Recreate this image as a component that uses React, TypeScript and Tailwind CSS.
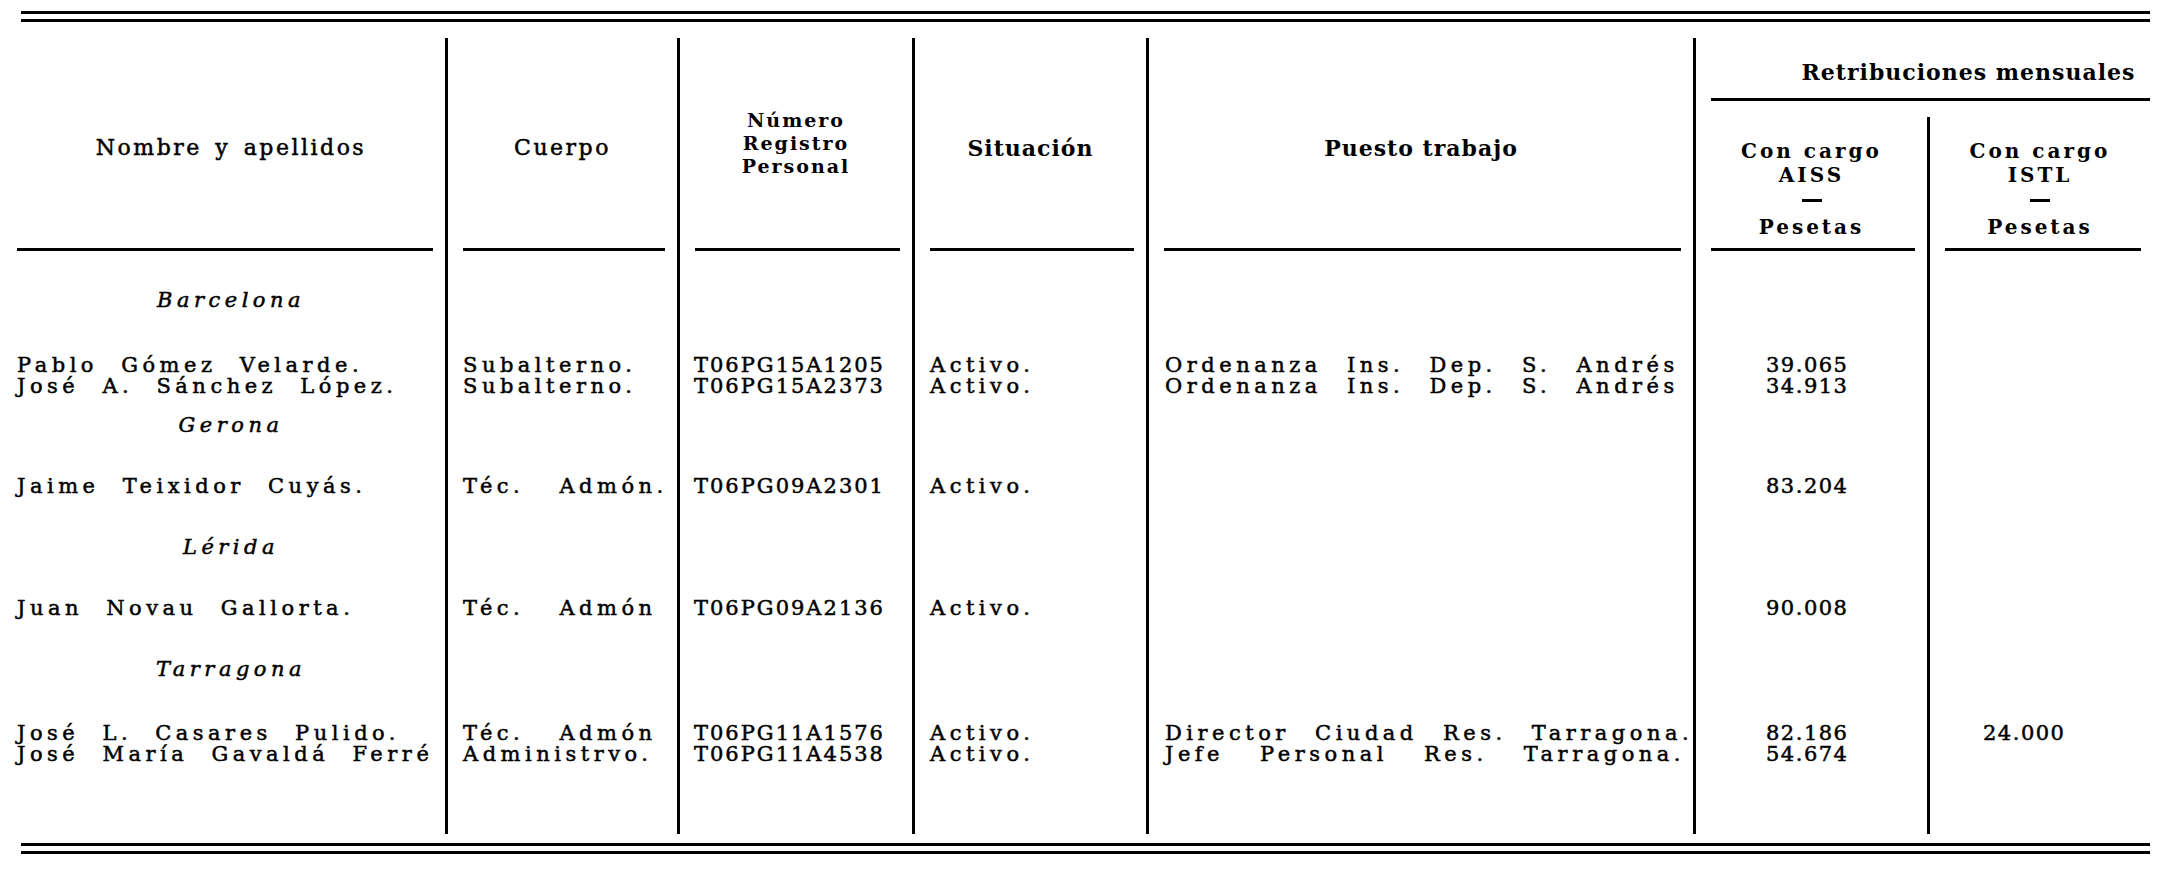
const cols = "grid grid-cols-[428px_232px_235px_234px_547px_234px_223px]";
const serif = "font-['DejaVu_Serif',serif]";
const ink = "[-webkit-text-stroke:0.5px_#000]";

type Person = {
  name: string;
  cuerpo: string;
  nrp: string;
  situacion: string;
  puesto?: string;
  justify?: boolean;
  aiss: string;
  istl?: string;
};

const groups: { province: string; gap: string; people: Person[] }[] = [
  {
    province: "Barcelona",
    gap: "pt-[38px]",
    people: [
      {
        name: "Pablo Gómez Velarde.",
        cuerpo: "Subalterno.",
        nrp: "T06PG15A1205",
        situacion: "Activo.",
        puesto: "Ordenanza Ins. Dep. S. Andrés",
        aiss: "39.065",
      },
      {
        name: "José A. Sánchez López.",
        cuerpo: "Subalterno.",
        nrp: "T06PG15A2373",
        situacion: "Activo.",
        puesto: "Ordenanza Ins. Dep. S. Andrés",
        aiss: "34.913",
      },
    ],
  },
  {
    province: "Gerona",
    gap: "pt-[18px]",
    people: [
      {
        name: "Jaime Teixidor Cuyás.",
        cuerpo: "Téc. Admón.",
        nrp: "T06PG09A2301",
        situacion: "Activo.",
        aiss: "83.204",
      },
    ],
  },
  {
    province: "Lérida",
    gap: "pt-[40px]",
    people: [
      {
        name: "Juan Novau Gallorta.",
        cuerpo: "Téc. Admón",
        nrp: "T06PG09A2136",
        situacion: "Activo.",
        aiss: "90.008",
      },
    ],
  },
  {
    province: "Tarragona",
    gap: "pt-[40px]",
    people: [
      {
        name: "José L. Casares Pulido.",
        cuerpo: "Téc. Admón",
        nrp: "T06PG11A1576",
        situacion: "Activo.",
        puesto: "Director Ciudad Res. Tarragona.",
        justify: true,
        aiss: "82.186",
        istl: "24.000",
      },
      {
        name: "José María Gavaldá Ferré",
        cuerpo: "Administrvo.",
        nrp: "T06PG11A4538",
        situacion: "Activo.",
        puesto: "Jefe Personal Res. Tarragona.",
        justify: true,
        aiss: "54.674",
      },
    ],
  },
];

// padding / spacing per column of the body
const inner = [
  "pl-0 tracking-[4.5px] [word-spacing:12px]",
  "pl-[15px] tracking-[4.5px]",
  "pl-[14px] tracking-[2px]",
  "pl-[15px] tracking-[4.5px]",
  "pl-[16px] pr-[8px] tracking-[4.5px] [word-spacing:14px]",
  "pl-[70px] tracking-[1.5px]",
  "pl-[53px] tracking-[1.5px]",
];

function Row({ cells, pad = "" }: { cells: React.ReactNode[]; pad?: string }) {
  return (
    <div className={`${cols} leading-[21px]`}>
      {cells.map((c, i) => (
        <div key={i} className={`${i > 0 ? "border-l-[3px] border-black" : ""} ${pad}`}>
          <div className={`${inner[i]} whitespace-nowrap`}>{c}</div>
        </div>
      ))}
    </div>
  );
}

function HeadCell({ children, first }: { children: React.ReactNode; first?: boolean }) {
  return (
    <div className={`flex flex-col ${first ? "" : "border-l-[3px] border-black"}`}>
      <div className="flex flex-1 items-center justify-center pt-[10px] text-center">{children}</div>
      <div className={`h-[3px] bg-black ${first ? "ml-0 mr-[12px]" : "ml-[15px] mr-[12px]"}`} />
      <div className="h-[1px]" />
    </div>
  );
}

function Rules({ className }: { className: string }) {
  return (
    <div className={`ml-[21px] w-[2129px] flex flex-col gap-[5px] ${className}`}>
      <div className="h-[3px] bg-black" />
      <div className="h-[3px] bg-black" />
    </div>
  );
}

function SubHead({ code, border }: { code: string; border?: boolean }) {
  return (
    <div className={`flex flex-col ${border ? "border-l-[3px] border-black" : ""}`}>
      <div className="flex flex-1 flex-col items-center pt-[22px] text-center text-[20px] leading-[24px] tracking-[3px]">
        <span>Con cargo</span>
        <span>{code}</span>
        <span className="mt-[12px] h-[3px] w-[20px] bg-black" />
        <span className="mt-[13px]">Pesetas</span>
      </div>
      <div className={`h-[3px] bg-black ${border ? "ml-[15px] mr-[9px]" : "ml-[15px] mr-[12px]"}`} />
      <div className="h-[1px]" />
    </div>
  );
}

export default function App() {
  return (
    <div className={`w-[2168px] h-[872px] bg-white text-black overflow-hidden ${serif}`}>
      <Rules className="pt-[11px]" />

      <div className="ml-[17px] mt-[16px]">
        {/* header */}
        <div className={`${cols} h-[214px] text-[22px] leading-[26px]`}>
          <HeadCell first>
            <span className={`tracking-[2.5px] [word-spacing:4px] ${ink}`}>Nombre y apellidos</span>
          </HeadCell>
          <HeadCell>
            <span className={`tracking-[2.5px] ${ink}`}>Cuerpo</span>
          </HeadCell>
          <HeadCell>
            <span className="-mt-[10px] text-[19px] font-bold leading-[23px] tracking-[2px]">
              Número
              <br />
              Registro
              <br />
              Personal
            </span>
          </HeadCell>
          <HeadCell>
            <span className="font-bold tracking-[1px]">Situación</span>
          </HeadCell>
          <HeadCell>
            <span className="font-bold tracking-[1px]">Puesto trabajo</span>
          </HeadCell>
          <div className="col-span-2 flex flex-col border-l-[3px] border-black font-bold">
            <div className="flex h-[63px] flex-col justify-end pl-[15px]">
              <div className="pb-[13px] pl-[76px] text-center tracking-[1px]">Retribuciones mensuales</div>
              <div className="h-[3px] bg-black" />
            </div>
            <div className="mt-[16px] grid flex-1 grid-cols-[231px_223px]">
              <SubHead code="AISS" />
              <SubHead code="ISTL" border />
            </div>
          </div>
        </div>

        {/* body */}
        <div className={`text-[21px] ${ink}`}>
          {groups.map((g, gi) => (
            <div key={g.province}>
              <Row
                pad={g.gap}
                cells={[<div className="text-center italic">{g.province}</div>, "", "", "", "", "", ""]}
              />
              {g.people.map((p, pi) => (
                <Row
                  key={p.nrp}
                  pad={pi === 0 ? (gi === 0 ? "pt-[44px]" : gi === 3 ? "pt-[43px]" : "pt-[40px]") : ""}
                  cells={[
                    p.name,
                    p.cuerpo.startsWith("Téc") ? <span className="[word-spacing:24px]">{p.cuerpo}</span> : p.cuerpo,
                    p.nrp,
                    p.situacion,
                    p.puesto ? (
                      <div className={p.justify ? "text-justify [text-align-last:justify]" : ""}>{p.puesto}</div>
                    ) : (
                      ""
                    ),
                    p.aiss,
                    p.istl ?? "",
                  ]}
                />
              ))}
            </div>
          ))}
          <Row pad="h-[69px]" cells={["", "", "", "", "", "", ""]} />
        </div>
      </div>

      <Rules className="mt-[9px]" />
    </div>
  );
}
